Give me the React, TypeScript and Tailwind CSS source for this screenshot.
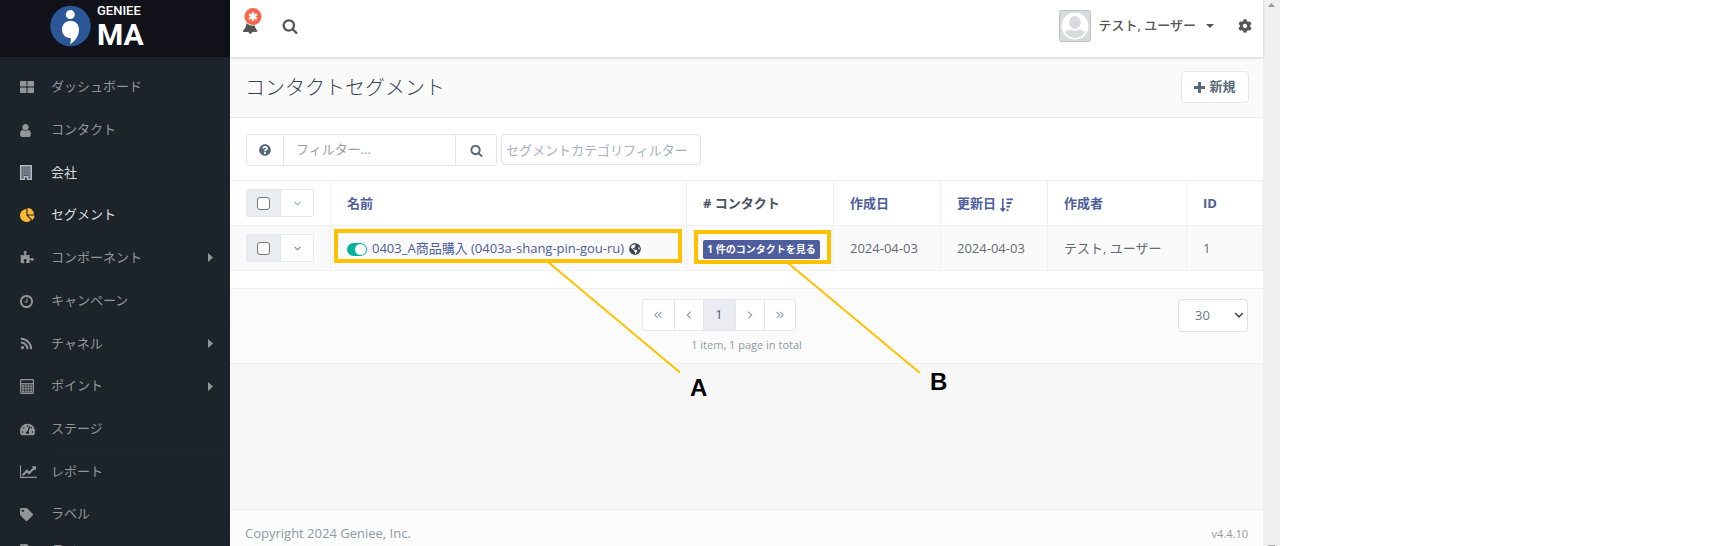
import { useState } from 'react';
import type { ReactNode } from 'react';
import { FaCog, FaGlobeAmericas, FaQuestionCircle, FaRss, FaTachometerAlt, FaTag } from 'react-icons/fa';

interface IconProps {
  className?: string;
}

interface MenuItem {
  label: string;
  icon: ReactNode;
  bright?: boolean;
  iconColor?: string;
  hasChildren?: boolean;
}

const SearchIcon = ({ className }: IconProps) => (
  <svg viewBox="0 0 1792 1792" fill="currentColor" className={className} aria-hidden="true">
    <path d="M1216 832q0-185-131.5-316.5t-316.5-131.5-316.5 131.5-131.5 316.5 131.5 316.5 316.5 131.5 316.5-131.5 131.5-316.5zm512 832q0 52-38 90t-90 38q-54 0-90-38l-343-342q-179 124-399 124-143 0-273.5-55.5t-225-150-150-225-55.5-273.5 55.5-273.5 150-225 225-150 273.5-55.5 273.5 55.5 225 150 150 225 55.5 273.5q0 220-124 399l343 343q37 37 37 90z" />
  </svg>
);

const GridIcon = () => (
  <svg viewBox="0 0 14 12" fill="currentColor" className="w-3.5 h-3">
    <rect width="6.5" height="5.5" rx="0.6" />
    <rect x="7.5" width="6.5" height="5.5" rx="0.6" />
    <rect y="6.5" width="6.5" height="5.5" rx="0.6" />
    <rect x="7.5" y="6.5" width="6.5" height="5.5" rx="0.6" />
  </svg>
);

const UserIcon = () => (
  <svg viewBox="256 128 1280 1536" fill="currentColor" className="w-[11px] h-[13px]">
    <path d="M1536 1399q0 109-62.5 187t-150.5 78h-854q-88 0-150.5-78t-62.5-187q0-85 8.5-160.5t31.5-152 58.5-131 94-89 134.5-34.5q131 128 313 128t313-128q76 0 134.5 34.5t94 89 58.5 131 31.5 152 8.5 160.5zm-256-887q0 159-112.5 271.5t-271.5 112.5-271.5-112.5-112.5-271.5 112.5-271.5 271.5-112.5 271.5 112.5 112.5 271.5z" />
  </svg>
);

const BuildingIcon = () => (
  <svg viewBox="0 0 12 15" className="w-3 h-[15px]">
    <path d="M0.8 0.8h10.4v13.4H7.6v-2.4H4.4v2.4H0.8z" fill="currentColor" fillOpacity="0.35" stroke="currentColor" strokeWidth="1.6" />
    <path d="M2.6 3h7M2.6 5h7M2.6 7h7M2.6 9h7" stroke="currentColor" strokeWidth="1.1" strokeDasharray="1.3 0.6" />
    <path d="M2.6 11h1.2M8.2 11h1.2" stroke="currentColor" strokeWidth="1.1" />
  </svg>
);

const PieIcon = () => (
  <svg viewBox="0 0 1792 1792" fill="currentColor" className="w-[15px] h-[15px]">
    <path d="M768 890l546 546q-106 108-247.5 168t-298.5 60q-209 0-385.5-103t-279.5-279.5-103-385.5 103-385.5 279.5-279.5 385.5-103v762zm187 6h773q0 157-60 298.5t-168 247.5zm709-128h-768v-768q209 0 385.5 103t279.5 279.5 103 385.5z" />
  </svg>
);

const PuzzleIcon = () => (
  <svg viewBox="0 0 1792 1792" fill="currentColor" className="w-3.5 h-3.5">
    <path d="M1755 1083q0 81-44.5 135t-123.5 54q-41 0-77.5-17.5t-59-38-56.5-38-71-17.5q-110 0-110 124 0 39 16 115t15 115v5q-22 0-33 1-34 3-97.5 11.5t-115.5 13.5-98 5q-61 0-103-26.5t-42-83.5q0-37 17.5-71t38-56.5 38-59 17.5-77.5q0-79-54-123.5t-135-44.5q-84 0-143 45.5t-59 127.5q0 43 15 83t33.5 64.5 33.5 53 15 50.5q0 45-46 89-37 35-117 35-95 0-245-24-9-2-27.5-4t-27.5-4l-13-2q-1 0-3-1-2 0-2-1v-1024q2 1 17.5 3.5t34 5 21.5 3.5q150 24 245 24 80 0 117-35 46-44 46-89 0-22-15-50.5t-33.5-53-33.5-64.5-15-83q0-82 59-127.5t144-45.5q80 0 134 44.5t54 123.5q0 41-17.5 77.5t-38 59-38 56.5-17.5 71q0 57 42 83.5t103 26.5q64 0 180-15t163-17v2q-1 2-3.5 17.5t-5 34-3.5 21.5q-24 150-24 245 0 80 35 117 44 46 89 46 22 0 50.5-15t53-33.5 64.5-33.5 83-15q82 0 127.5 59t45.5 143z" />
  </svg>
);

const ClockIcon = () => (
  <svg viewBox="128 128 1536 1536" fill="currentColor" className="w-[13px] h-[13px]">
    <path d="M1024 544v448q0 14-9 23t-23 9h-320q-14 0-23-9t-9-23v-64q0-14 9-23t23-9h224v-352q0-14 9-23t23-9h64q14 0 23 9t9 23zm416 352q0-148-73-273t-198-198-273-73-273 73-198 198-73 273 73 273 198 198 273 73 273-73 198-198 73-273zm224 0q0 209-103 385.5t-279.5 279.5-385.5 103-385.5-103-279.5-279.5-103-385.5 103-385.5 279.5-279.5 385.5-103 385.5 103 279.5 279.5 103 385.5z" />
  </svg>
);

const CalculatorIcon = () => (
  <svg viewBox="0 0 14 15" fill="none" stroke="currentColor" className="w-3.5 h-[15px]">
    <rect x="0.6" y="0.6" width="12.8" height="13.8" rx="0.8" strokeWidth="1.2" />
    <path d="M0.6 4.8h12.8" strokeWidth="1.4" />
    <path d="M1.8 7.2h10.6M1.8 9.8h10.6M1.8 12.4h10.6" strokeWidth="2" strokeDasharray="2.1 0.7" />
  </svg>
);

const LineChartIcon = () => (
  <svg viewBox="0 128 2048 1536" fill="currentColor" className="w-[17px] h-[13px]">
    <path d="M2048 1536v128h-2048v-1536h128v1408h1920zm-128-1248v435q0 21-19.5 29.5t-35.5-7.5l-121-121-633 633q-10 10-23 10t-23-10l-233-233-416 416-192-192 585-585q10-10 23-10t23 10l233 233 464-464-121-121q-16-16-7.5-35.5t29.5-19.5h435q14 0 23 9t9 23z" />
  </svg>
);

const SortDescIcon = () => (
  <svg viewBox="0 0 13 14" fill="none" stroke="currentColor" className="inline w-[13px] h-3.5 ml-1">
    <path d="M2.8 0.5v11M0.6 10.2l2.2 2.6 2.2-2.6" strokeWidth="1.6" />
    <path d="M6.5 1.4H13M6.5 5h5M6.5 8.6H10M6.5 12.2h2" strokeWidth="1.8" />
  </svg>
);

const ChevronDown = ({ className }: IconProps) => (
  <svg viewBox="0 0 8 5" fill="none" stroke="currentColor" strokeWidth="1.3" className={className} aria-hidden="true">
    <path d="M0.8 0.8L4 4l3.2-3.2" />
  </svg>
);

const menuItems: MenuItem[] = [
  { label: 'ダッシュボード', icon: <GridIcon /> },
  { label: 'コンタクト', icon: <UserIcon /> },
  { label: '会社', icon: <BuildingIcon />, bright: true, iconColor: 'text-[#b4b8c8]' },
  { label: 'セグメント', icon: <PieIcon />, bright: true, iconColor: 'text-[#fdb933]' },
  { label: 'コンポーネント', icon: <PuzzleIcon />, hasChildren: true },
  { label: 'キャンペーン', icon: <ClockIcon /> },
  { label: 'チャネル', icon: <FaRss size={13} />, hasChildren: true },
  { label: 'ポイント', icon: <CalculatorIcon />, hasChildren: true },
  { label: 'ステージ', icon: <FaTachometerAlt size={15} /> },
  { label: 'レポート', icon: <LineChartIcon /> },
  { label: 'ラベル', icon: <FaTag size={13} /> },
];

function Logo() {
  return (
    <div className="flex items-start h-[57px] pl-[50px] pt-[5px] gap-[6px] bg-[#11111a] text-white shrink-0">
      <svg viewBox="0 0 42 42" className="w-[41px] h-[42px]" aria-hidden="true">
        <circle cx="21" cy="21" r="20.7" fill="#2b5797" />
        <circle cx="20.8" cy="9.3" r="4.6" fill="#fff" />
        <path d="M21 15.7c5.3 0 8.7 3.900 8.700 9 0 6.500-3.600 11.800-9.200 15 .8-2.100 1-4 .8-6.100-5.300.1-9-3.900-9-8.900 0-5.100 3.600-9 8.700-9z" fill="#fff" />
      </svg>
      <div className="font-['Roboto',sans-serif]">
        <div className="text-[13px] leading-[12px] font-medium">GENIEE</div>
        <div className="text-3xl leading-[36px] font-bold">MA</div>
      </div>
    </div>
  );
}

function Sidebar() {
  return (
    <aside className="w-[230px] shrink-0 flex flex-col overflow-hidden bg-[#1d232b]">
      <Logo />
      <ul className="flex flex-col h-[479px] pt-[9px] shrink-0 text-[13px]">
        {menuItems.map((item) => (
          <li key={item.label} className="flex-1">
            <a href="#" className={`flex items-center h-full pl-5 ${item.bright ? 'text-[#dcdedf]' : 'text-[#939698]'}`}>
              <span className={`w-[31px] shrink-0 ${item.iconColor || ''}`}>{item.icon}</span>
              <span className="flex-1 flex items-center justify-between h-full pr-[17px] border-b border-[#20272e]">
                {item.label}
                {item.hasChildren && (
                  <svg viewBox="0 0 5 9" fill="currentColor" className="w-[5px] h-[9px]" aria-hidden="true">
                    <path d="M0 0l5 4.500L0 9z" />
                  </svg>
                )}
              </span>
            </a>
          </li>
        ))}
      </ul>
      <a href="#" className="flex items-center h-[29px] pl-5 shrink-0 text-[13px] text-[#939698]">
        <span className="w-[31px]"><FaTag size={13} /></span>
        ラベル
      </a>
    </aside>
  );
}

function TopBar() {
  return (
    <header className="relative flex items-center justify-between h-[57px] pl-3 pr-[11px] pb-[5px] bg-white text-[#555] shadow-[0_1px_3px_rgba(0,0,0,0.18)]">
      <div className="flex items-center gap-[22px]">
        <button type="button" aria-label="通知">
          <svg viewBox="0 0 20 36" className="w-5 h-9">
            <path d="M4.500 15c-.2 3-1.400 5.500-3.500 7.800l.2 1.100 5.300.1c.3 1.200 1 1.800 1.900 1.800s1.600-.7 1.800-1.800l5-.2.2-1.200c-1.500-1.300-2.300-3-2.700-5.600z" fill="#555" />
            <circle cx="11" cy="8.500" r="9.300" fill="#fff" />
            <circle cx="11" cy="8.500" r="8.500" fill="#fa6648" />
            <path d="M11 4v9M7.100 6.250l7.800 4.500M14.900 6.250l-7.800 4.500" stroke="#fff" strokeWidth="2.300" />
          </svg>
        </button>
        <button type="button" aria-label="検索" className="-ml-0.5">
          <SearchIcon className="w-4 h-4" />
        </button>
      </div>
      <div className="flex items-center">
        <button type="button" className="flex items-center text-[13px] font-medium">
          <svg viewBox="0 0 32 32" className="w-8 h-8 mr-2" aria-hidden="true">
            <rect x="0.5" y="0.5" width="31" height="31" rx="2" fill="#d9dade" stroke="#bfc0c4" />
            <circle cx="16" cy="16" r="13.500" fill="#fff" />
            <ellipse cx="16" cy="12.500" rx="5.700" ry="6.500" fill="#d9dade" />
            <path d="M6 22c2.500-2.500 6-3.300 10-1 4-2.300 7.500-1.500 10 1-2 3.800-5.700 6-10 6s-8-2.200-10-6z" fill="#d9dade" />
          </svg>
          テスト, ユーザー
          <svg viewBox="0 0 8 4" fill="currentColor" className="w-2 h-1 ml-2.5" aria-hidden="true">
            <path d="M0 0h8L4 4z" />
          </svg>
        </button>
        <button type="button" aria-label="設定" className="ml-6">
          <FaCog size={14} />
        </button>
      </div>
    </header>
  );
}

function RowSelector({ label, muted }: { label: string; muted?: boolean }) {
  return (
    <div className="flex w-[68px] h-[28px] bg-white border border-[#e6e7ea] rounded-xs overflow-hidden">
      <label className="flex items-center justify-center w-[34px] bg-[#ebecf1] border-r border-[#e6e7ea]">
        <input
          type="checkbox"
          aria-label={label}
          className="appearance-none w-[13px] h-[13px] bg-white border border-[#767676] rounded-[3px] checked:bg-[#4e5d9d]"
        />
      </label>
      <button type="button" aria-label="操作" className={`flex-1 flex items-center justify-center ${muted ? 'text-[#a3abb3]' : 'text-[#7b868f]'}`}>
        <ChevronDown className="w-[7px] h-[5px]" />
      </button>
    </div>
  );
}

function SegmentTable() {
  const [published, setPublished] = useState(true);
  const th = 'h-[45px] px-4 pt-0.5 text-left font-bold border-r border-b border-[#f0f1f3]';
  const td = 'h-[45px] px-4 pt-0.5 border-r border-b border-[#eff0f2]';
  const selectorCell = 'h-[45px] px-4 border-r border-b border-[#eff0f2]';

  return (
    <table className="w-full table-fixed border-separate border-spacing-0 text-[13px] border-t border-[#eff0f2]">
      <colgroup>
        <col className="w-[101px]" />
        <col />
        <col className="w-[147px]" />
        <col className="w-[107px]" />
        <col className="w-[107px]" />
        <col className="w-[139px]" />
        <col className="w-[76px]" />
      </colgroup>
      <thead className="text-[#4e5d9d]">
        <tr>
          <th className={selectorCell}><RowSelector label="すべて選択" muted /></th>
          <th className={th}><a href="#">名前</a></th>
          <th className={`${th} text-[#47535f]`}># コンタクト</th>
          <th className={th}><a href="#">作成日</a></th>
          <th className={th}><a href="#">更新日<SortDescIcon /></a></th>
          <th className={th}><a href="#">作成者</a></th>
          <th className={th}><a href="#">ID</a></th>
        </tr>
      </thead>
      <tbody>
        <tr className="bg-[#fafafa] text-[#5f6b76]">
          <td className={selectorCell}><RowSelector label="0403_A商品購入を選択" /></td>
          <td className={td}>
            <div className="flex items-center gap-[5px]">
              <button type="button" role="switch" aria-checked={published} aria-label="公開" onClick={() => setPublished(!published)}>
                <svg viewBox="0 0 20 13" className="w-5 h-[13px]">
                  <rect width="20" height="13" rx="6.500" fill={published ? '#00b49c' : '#a5adb5'} />
                  <circle cx={published ? 13.5 : 6.5} cy="6.500" r="5.500" fill="#fff" />
                </svg>
              </button>
              <a href="#" className="text-[#4e5d9d]">0403_A商品購入 (0403a-shang-pin-gou-ru)</a>
              <FaGlobeAmericas size={12} className="text-[#3a4550]" />
            </div>
          </td>
          <td className={td}>
            <a href="#" className="flex items-center justify-center w-[117px] h-[19px] rounded-xs bg-[#4e5d9d] text-white text-[10px] font-bold whitespace-nowrap">
              1 件のコンタクトを見る
            </a>
          </td>
          <td className={td}>2024-04-03</td>
          <td className={td}>2024-04-03</td>
          <td className={td}>テスト, ユーザー</td>
          <td className={td}>1</td>
        </tr>
      </tbody>
    </table>
  );
}

function Pager() {
  const cell = 'flex items-center justify-center h-full text-[#93a1ad] border-r border-[#e6e7ea]';
  return (
    <div className="flex items-start justify-between h-[76px] pt-[10px] px-[15px] bg-[#fbfbfb] border-y border-[#efefef]">
      <div className="w-[70px]" />
      <div className="flex flex-col items-center">
        <nav className="flex w-[154px] h-8 mr-14 bg-white border border-[#e6e7ea] rounded-[3px] overflow-hidden">
          <button type="button" aria-label="最初" className={`${cell} w-8`}>
            <svg viewBox="0 0 8 8" fill="none" stroke="currentColor" strokeWidth="1.100" className="w-2 h-2"><path d="M4 .8L.8 4 4 7.200M7.400.8L4.200 4l3.200 3.200" /></svg>
          </button>
          <button type="button" aria-label="前へ" className={`${cell} w-[29px]`}>
            <svg viewBox="0 0 8 8" fill="none" stroke="currentColor" strokeWidth="1.300" className="w-2 h-2"><path d="M5.700.6L2.300 4l3.400 3.400" /></svg>
          </button>
          <button type="button" aria-current="page" className="flex items-center justify-center w-8 h-full border-r border-[#e6e7ea] bg-[#ebecf1] text-[13px] text-[#4e5d7d]">1</button>
          <button type="button" aria-label="次へ" className={`${cell} w-[29px]`}>
            <svg viewBox="0 0 8 8" fill="none" stroke="currentColor" strokeWidth="1.300" className="w-2 h-2"><path d="M2.300.6L5.700 4 2.300 7.400" /></svg>
          </button>
          <button type="button" aria-label="最後" className="flex flex-1 items-center justify-center text-[#93a1ad]">
            <svg viewBox="0 0 8 8" fill="none" stroke="currentColor" strokeWidth="1.100" className="w-2 h-2"><path d="M.6.8L3.800 4 .6 7.200M4 .8L7.200 4 4 7.200" /></svg>
          </button>
        </nav>
        <p className="mt-1 text-[11px] leading-5 text-[#8d9ba5]">1 item, 1 page in total</p>
      </div>
      <div className="relative">
        <select aria-label="表示件数" defaultValue="30" className="appearance-none w-[70px] h-[33px] pl-4 bg-white border border-[#dfe1e4] rounded text-[13px] text-[#6c7a86]">
          <option>10</option>
          <option>30</option>
          <option>50</option>
        </select>
        <ChevronDown className="absolute right-1 top-[13px] w-[10px] h-[6px] text-[#3f4a55] pointer-events-none" />
      </div>
    </div>
  );
}

// セグメント一覧の上に重ねる注釈 (A / B)
function Annotations() {
  return (
    <div className="absolute inset-0 pointer-events-none">
      <div className="absolute left-[334px] top-[229px] w-[348px] h-[34px] border-4 border-[#ffc000]" />
      <div className="absolute left-[694px] top-[230px] w-[137px] h-[34px] border-4 border-[#ffc000]" />
      <svg className="absolute left-[540px] top-[260px] w-[400px] h-[120px]" stroke="#ffc000" strokeWidth="2" aria-hidden="true">
        <path d="M8 2L140 112.500M248 3L380 113" />
      </svg>
      <span className="absolute left-[690px] top-[374px] text-2xl leading-7 font-bold text-black font-['Liberation_Sans',sans-serif]">A</span>
      <span className="absolute left-[930px] top-[368px] text-2xl leading-7 font-bold text-black font-['Liberation_Sans',sans-serif]">B</span>
    </div>
  );
}

export default function App() {
  return (
    <div className="bg-white font-['Open_Sans','Noto_Sans_CJK_JP',sans-serif]">
      <div className="relative flex w-full max-w-[1280px] h-screen overflow-hidden">
        <Sidebar />
        <div className="flex-1 min-w-0 flex flex-col bg-[#f7f7f7]">
          <TopBar />
          <div className="flex items-center justify-between h-[61px] pl-[15px] pr-3.5 bg-[#fafafa] border-b border-[#ebebeb]">
            <h1 className="pt-0.5 text-xl font-light text-[#36424e]">コンタクトセグメント</h1>
            <button type="button" className="flex items-center justify-center gap-1 w-[68px] h-8 bg-white border border-[#e6e7ea] rounded text-[13px] font-bold text-[#5b6b7b]">
              <svg viewBox="0 0 11 11" fill="currentColor" className="w-[11px] h-[11px]" aria-hidden="true">
                <path d="M4 0h3v4h4v3H7v4H4V7H0V4h4z" />
              </svg>
              新規
            </button>
          </div>

          <main className="bg-white">
            {/* フィルター */}
            <div className="flex h-[62px] px-4 pt-4 gap-1 text-[13px]">
              <div className="flex h-8 border border-[#e3e5e8] rounded-[3px] text-[#55657a]">
                <button type="button" aria-label="ヘルプ" className="flex items-center justify-center w-9">
                  <FaQuestionCircle size={12} />
                </button>
                <input aria-label="フィルター" placeholder="フィルター..." className="w-[173px] px-3 border-x border-[#e3e5e8] placeholder:text-[#9aa0a6]" />
                <button type="button" aria-label="検索" className="flex items-center justify-center w-10">
                  <SearchIcon className="w-[13px] h-[13px]" />
                </button>
              </div>
              <input
                aria-label="セグメントカテゴリフィルター"
                placeholder="セグメントカテゴリフィルター"
                className="w-[200px] h-[31px] px-1 border border-[#dcdfe3] rounded placeholder:text-[#a3b1bf]"
              />
            </div>
            <SegmentTable />
            <div className="h-[17px]" />
          </main>
          <Pager />

          <footer className="flex items-center justify-between h-[37px] mt-auto px-[15px] pt-3 bg-[#fcfcfc] border-t border-[#ebebeb] text-[13px] text-[#8b9ba5]">
            <span>Copyright 2024 Geniee, Inc.</span>
            <span className="text-[11px]">v4.4.10</span>
          </footer>
        </div>

        {/* スクロールバー */}
        <div className="flex flex-col items-center justify-between w-[17px] shrink-0 pt-[3px] bg-[#f0f0f0]">
          <svg viewBox="0 0 7 4" fill="#999" className="w-[7px] h-1" aria-hidden="true">
            <path d="M3.500 0L7 4H0z" />
          </svg>
          <div className="w-[7px] h-px bg-[#a8a8a8]" />
        </div>
        <Annotations />
      </div>
    </div>
  );
}
